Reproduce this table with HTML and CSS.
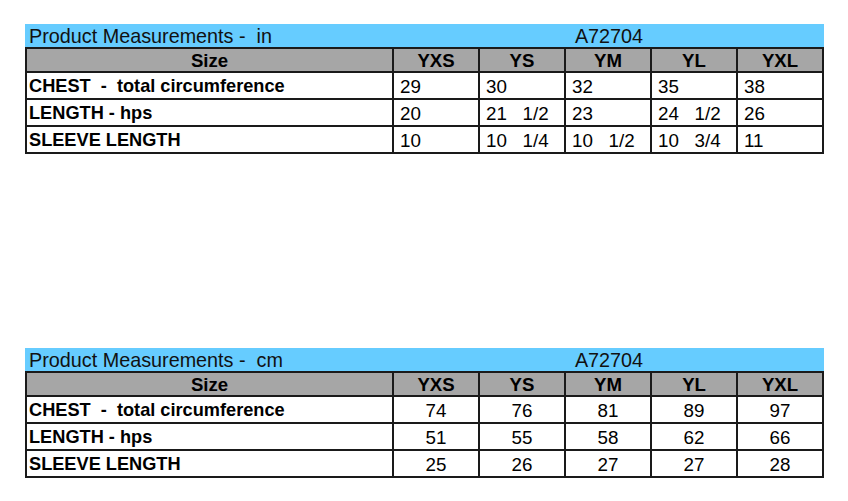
FILE: index.html
```html
<!DOCTYPE html>
<html lang="en">
<head>
<meta charset="utf-8">
<title>Product Measurements A72704</title>
<link rel="stylesheet" href="styles.css">
</head>
<body>
<main class="page">
  <table class="measure measure-in">
    <colgroup>
      <col class="c-label"><col class="c-size"><col class="c-size"><col class="c-size"><col class="c-size"><col class="c-size">
    </colgroup>
    <tr class="title-row">
      <td colspan="2" class="title-left">Product Measurements -  in</td>
      <td colspan="3" class="title-style">A72704</td>
      <td></td>
    </tr>
    <tr class="head-row">
      <th class="first">Size</th><th>YXS</th><th>YS</th><th>YM</th><th>YL</th><th>YXL</th>
    </tr>
    <tr class="data-row">
      <td class="first label">CHEST  -  total circumference</td><td>29</td><td>30</td><td>32</td><td>35</td><td>38</td>
    </tr>
    <tr class="data-row">
      <td class="first label">LENGTH - hps</td><td>20</td><td>21   1/2</td><td>23</td><td>24   1/2</td><td>26</td>
    </tr>
    <tr class="data-row">
      <td class="first label">SLEEVE LENGTH</td><td>10</td><td>10   1/4</td><td>10   1/2</td><td>10   3/4</td><td>11</td>
    </tr>
  </table>

  <table class="measure measure-cm">
    <colgroup>
      <col class="c-label"><col class="c-size"><col class="c-size"><col class="c-size"><col class="c-size"><col class="c-size">
    </colgroup>
    <tr class="title-row">
      <td colspan="2" class="title-left">Product Measurements -  cm</td>
      <td colspan="3" class="title-style">A72704</td>
      <td></td>
    </tr>
    <tr class="head-row">
      <th class="first">Size</th><th>YXS</th><th>YS</th><th>YM</th><th>YL</th><th>YXL</th>
    </tr>
    <tr class="data-row">
      <td class="first label">CHEST  -  total circumference</td><td>74</td><td>76</td><td>81</td><td>89</td><td>97</td>
    </tr>
    <tr class="data-row">
      <td class="first label">LENGTH - hps</td><td>51</td><td>55</td><td>58</td><td>62</td><td>66</td>
    </tr>
    <tr class="data-row">
      <td class="first label">SLEEVE LENGTH</td><td>25</td><td>26</td><td>27</td><td>27</td><td>28</td>
    </tr>
  </table>
</main>
</body>
</html>
```

FILE: styles.css
```css
html, body {
  margin: 0;
  padding: 0;
  background: #ffffff;
}

.page {
  padding: 24px 0 0 25px;
  font-family: "Liberation Sans", Arial, sans-serif;
  color: #000;
}

.measure {
  border-collapse: separate;
  border-spacing: 0;
  table-layout: fixed;
  width: 799px;
}

.measure-cm {
  margin-top: 194px;
}

.c-label { width: 369px; }
.c-size { width: 86px; }

.measure td,
.measure th {
  padding: 0;
  box-sizing: border-box;
  white-space: pre;
  overflow: hidden;
}

/* title bar */
.title-row td {
  background: #66ccff;
  height: 23px;
  font-size: 19.8px;
  line-height: 22px;
  padding-top: 1px;
  color: #111;
}
.title-left {
  text-align: left;
  padding-left: 4px !important;
}
.title-style {
  text-align: center;
}

/* header row */
.head-row th {
  background: #a6a6a6;
  border-top: 2px solid #1a1a1a;
  border-bottom: 2px solid #1a1a1a;
  border-right: 2px solid #1a1a1a;
  height: 26px;
  font-size: 18.6px;
  font-weight: bold;
  line-height: 20px;
  padding-top: 2px;
  text-align: center;
  vertical-align: top;
}

/* data rows */
.data-row td {
  border-bottom: 2px solid #1a1a1a;
  border-right: 2px solid #1a1a1a;
  height: 27px;
  font-size: 18.8px;
  line-height: 23px;
  padding-top: 2px;
  vertical-align: top;
  background: #fff;
}

.measure .first {
  border-left: 2px solid #1a1a1a;
}

.data-row .label {
  font-weight: bold;
  font-size: 18.2px;
  padding-left: 2px;
  text-align: left;
}

.measure-in .data-row td:not(.label) {
  text-align: left;
  padding-left: 6px;
}

.measure-cm .data-row td:not(.label) {
  text-align: center;
}
```
